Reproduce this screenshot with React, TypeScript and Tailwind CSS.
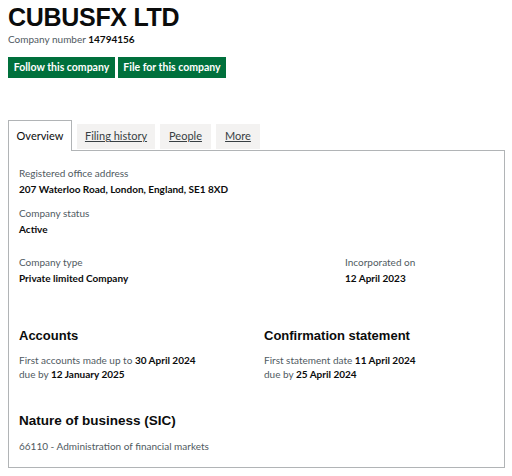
import React from "react";

const body = { fontFamily: "Lato, 'Liberation Sans', Arial, sans-serif" };
const head = { fontFamily: "'Liberation Sans', Arial, sans-serif" };

const Field = ({ label, value }: { label: string; value: string }) => (
	<div>
		<div className="text-[10px] leading-[14px] text-[#505a5f]">{label}</div>
		<div className="mt-[2px] text-[10px] leading-[14px] font-bold text-[#0b0c0c]">
			{value}
		</div>
	</div>
);

export default function App() {
	return (
		<div className="min-h-[476px] bg-white px-2 text-[#0b0c0c]" style={body}>
			{/* header */}
			<h1
				className="pt-[5px] text-[25px] leading-none font-bold tracking-[-0.3px]"
				style={head}
			>
				CUBUSFX LTD
			</h1>
			<div className="mt-[2px] text-[10px] leading-[14px]">
				<span className="text-[#505a5f]">Company number </span>
				<span className="font-bold">14794156</span>
			</div>

			<div className="mt-[11px] flex gap-[3px]">
				<button className="h-[21px] w-[107px] bg-[#00703c] text-[10.5px] font-bold text-white">
					Follow this company
				</button>
				<button className="h-[21px] w-[108px] bg-[#00703c] text-[10.5px] font-bold text-white">
					File for this company
				</button>
			</div>

			{/* tabs */}
			<div className="mt-[42px] flex items-end gap-[5px]">
				<div className="relative z-10 -mb-px flex h-[31px] w-[64px] items-center justify-center border border-b-0 border-[#b1b4b6] bg-white text-[11px]">
					Overview
				</div>
				<div className="mb-px flex h-[25px] w-[78px] items-center justify-center bg-[#f3f2f1] text-[11px] text-[#383f43] underline">
					Filing history
				</div>
				<div className="mb-px flex h-[25px] w-[51px] items-center justify-center bg-[#f3f2f1] text-[11px] text-[#383f43] underline">
					People
				</div>
				<div className="mb-px flex h-[25px] w-[44px] items-center justify-center bg-[#f3f2f1] text-[11px] text-[#383f43] underline">
					More
				</div>
			</div>

			{/* panel */}
			<div className="w-[497px] border border-[#b1b4b6] px-[10px] pt-[15px] pb-[14px]">
				<Field label="Registered office address" value="207 Waterloo Road, London, England, SE1 8XD" />
				<div className="mt-[10px]">
					<Field label="Company status" value="Active" />
				</div>
				<div className="mt-[19px] grid grid-cols-[326px_1fr]">
					<Field label="Company type" value="Private limited Company" />
					<Field label="Incorporated on" value="12 April 2023" />
				</div>

				<div className="mt-[43px] grid grid-cols-[245px_1fr]">
					<div>
						<h2 className="text-[13px] leading-[16px] font-bold" style={head}>
							Accounts
						</h2>
						<div className="mt-[9px] text-[10px] leading-[14px] text-[#505a5f]">
							First accounts made up to{" "}
							<span className="font-bold text-[#0b0c0c]">30 April 2024</span>
							<br />
							due by <span className="font-bold text-[#0b0c0c]">12 January 2025</span>
						</div>
					</div>
					<div>
						<h2 className="text-[13px] leading-[16px] font-bold" style={head}>
							Confirmation statement
						</h2>
						<div className="mt-[9px] text-[10px] leading-[14px] text-[#505a5f]">
							First statement date{" "}
							<span className="font-bold text-[#0b0c0c]">11 April 2024</span>
							<br />
							due by <span className="font-bold text-[#0b0c0c]">25 April 2024</span>
						</div>
					</div>
				</div>

				<h2 className="mt-[32px] text-[13.5px] leading-[16px] font-bold" style={head}>
					Nature of business (SIC)
				</h2>
				<div className="mt-[10px] text-[10px] leading-[14px] text-[#505a5f]">
					66110 - Administration of financial markets
				</div>
			</div>
		</div>
	);
}
